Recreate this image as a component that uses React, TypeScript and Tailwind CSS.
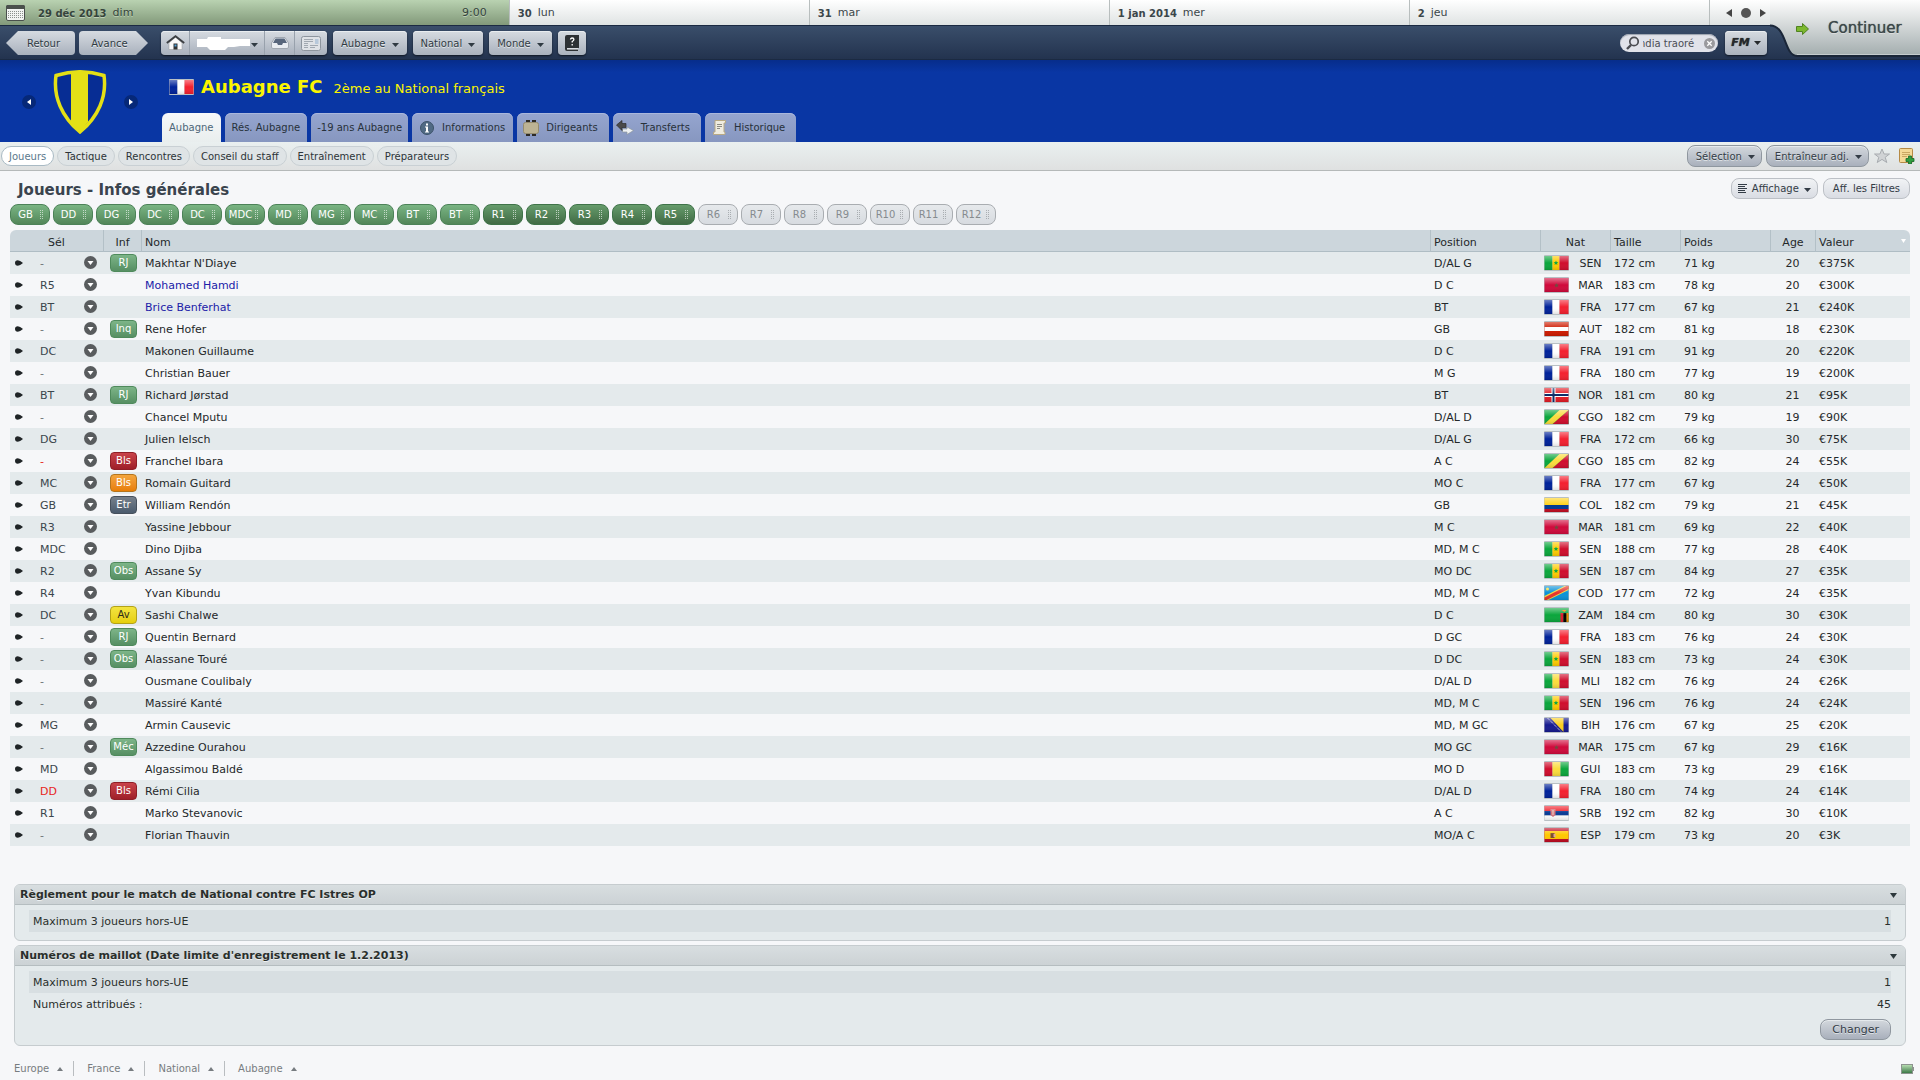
import type { ReactNode } from "react"

type Player = {
  sel: string
  inf?: string
  infColor?: string
  name: string
  pos: string
  nat: string
  cm: number
  kg: number
  age: number
  value: string
  linked?: boolean
  red?: boolean
}

const GREEN = "border-[#4f8a5c] bg-linear-to-b from-[#7db588] to-[#568f63] text-white"
const RED = "border-[#8f1f27] bg-linear-to-b from-[#c9434a] to-[#9f1f29] text-white"
const ORANGE = "border-[#b5751d] bg-linear-to-b from-[#f3a53c] to-[#e87e04] text-white"
const GREY = "border-[#46505c] bg-linear-to-b from-[#76808b] to-[#4b5b6d] text-white"
const YELLOW = "border-[#b3a218] bg-linear-to-b from-[#f3e43e] to-[#e6cf08] text-[#2b2b1a]"

const players: Player[] = [
  { sel: "-", inf: "RJ", infColor: GREEN, name: "Makhtar N'Diaye", pos: "D/AL G", nat: "SEN", cm: 172, kg: 71, age: 20, value: "€375K" },
  { sel: "R5", name: "Mohamed Hamdi", pos: "D C", nat: "MAR", cm: 183, kg: 78, age: 20, value: "€300K", linked: true },
  { sel: "BT", name: "Brice Benferhat", pos: "BT", nat: "FRA", cm: 177, kg: 67, age: 21, value: "€240K", linked: true },
  { sel: "-", inf: "Inq", infColor: GREEN, name: "Rene Hofer", pos: "GB", nat: "AUT", cm: 182, kg: 81, age: 18, value: "€230K" },
  { sel: "DC", name: "Makonen Guillaume", pos: "D C", nat: "FRA", cm: 191, kg: 91, age: 20, value: "€220K" },
  { sel: "-", name: "Christian Bauer", pos: "M G", nat: "FRA", cm: 180, kg: 77, age: 19, value: "€200K" },
  { sel: "BT", inf: "RJ", infColor: GREEN, name: "Richard Jørstad", pos: "BT", nat: "NOR", cm: 181, kg: 80, age: 21, value: "€95K" },
  { sel: "-", name: "Chancel Mputu", pos: "D/AL D", nat: "CGO", cm: 182, kg: 79, age: 19, value: "€90K" },
  { sel: "DG", name: "Julien Ielsch", pos: "D/AL G", nat: "FRA", cm: 172, kg: 66, age: 30, value: "€75K" },
  { sel: "-", inf: "Bls", infColor: RED, name: "Franchel Ibara", pos: "A C", nat: "CGO", cm: 185, kg: 82, age: 24, value: "€55K", red: true },
  { sel: "MC", inf: "Bls", infColor: ORANGE, name: "Romain Guitard", pos: "MO C", nat: "FRA", cm: 177, kg: 67, age: 24, value: "€50K" },
  { sel: "GB", inf: "Etr", infColor: GREY, name: "William Rendón", pos: "GB", nat: "COL", cm: 182, kg: 79, age: 21, value: "€45K" },
  { sel: "R3", name: "Yassine Jebbour", pos: "M C", nat: "MAR", cm: 181, kg: 69, age: 22, value: "€40K" },
  { sel: "MDC", name: "Dino Djiba", pos: "MD, M C", nat: "SEN", cm: 188, kg: 77, age: 28, value: "€40K" },
  { sel: "R2", inf: "Obs", infColor: GREEN, name: "Assane Sy", pos: "MO DC", nat: "SEN", cm: 187, kg: 84, age: 27, value: "€35K" },
  { sel: "R4", name: "Yvan Kibundu", pos: "MD, M C", nat: "COD", cm: 177, kg: 72, age: 24, value: "€35K" },
  { sel: "DC", inf: "Av", infColor: YELLOW, name: "Sashi Chalwe", pos: "D C", nat: "ZAM", cm: 184, kg: 80, age: 30, value: "€30K" },
  { sel: "-", inf: "RJ", infColor: GREEN, name: "Quentin Bernard", pos: "D GC", nat: "FRA", cm: 183, kg: 76, age: 24, value: "€30K" },
  { sel: "-", inf: "Obs", infColor: GREEN, name: "Alassane Touré", pos: "D DC", nat: "SEN", cm: 183, kg: 73, age: 24, value: "€30K" },
  { sel: "-", name: "Ousmane Coulibaly", pos: "D/AL D", nat: "MLI", cm: 182, kg: 76, age: 24, value: "€26K" },
  { sel: "-", name: "Massiré Kanté", pos: "MD, M C", nat: "SEN", cm: 196, kg: 76, age: 24, value: "€24K" },
  { sel: "MG", name: "Armin Causevic", pos: "MD, M GC", nat: "BIH", cm: 176, kg: 67, age: 25, value: "€20K" },
  { sel: "-", inf: "Méc", infColor: GREEN, name: "Azzedine Ourahou", pos: "MO GC", nat: "MAR", cm: 175, kg: 67, age: 29, value: "€16K" },
  { sel: "MD", name: "Algassimou Baldé", pos: "MO D", nat: "GUI", cm: 183, kg: 73, age: 29, value: "€16K" },
  { sel: "DD", inf: "Bls", infColor: RED, name: "Rémi Cilia", pos: "D/AL D", nat: "FRA", cm: 180, kg: 74, age: 24, value: "€14K", red: true },
  { sel: "R1", name: "Marko Stevanovic", pos: "A C", nat: "SRB", cm: 192, kg: 82, age: 30, value: "€10K" },
  { sel: "-", name: "Florian Thauvin", pos: "MO/A C", nat: "ESP", cm: 179, kg: 73, age: 20, value: "€3K" },
]

const starters = ["GB", "DD", "DG", "DC", "DC", "MDC", "MD", "MG", "MC", "BT", "BT"]
const subs = ["R1", "R2", "R3", "R4", "R5"]
const empties = ["R6", "R7", "R8", "R9", "R10", "R11", "R12"]

const STAR = "M12 5l.7 1.5 1.6.2-1.2 1.1.3 1.6-1.4-.8-1.4.8.3-1.6-1.2-1.1 1.6-.2z"

const flags: Record<string, ReactNode> = {
  FRA: (
    <>
      <path fill="#00229a" d="M0 0h8v14H0z" />
      <path fill="#fff" d="M8 0h7v14H8z" />
      <path fill="#f4202f" d="M15 0h9v14h-9z" />
    </>
  ),
  SEN: (
    <>
      <path fill="#0aa63c" d="M0 0h8v14H0z" />
      <path fill="#ffcb00" d="M8 0h7v14H8z" />
      <path fill="#d00d2d" d="M15 0h9v14h-9z" />
      <path fill="#0aa63c" d={STAR} transform="translate(-.5 -.5)" />
    </>
  ),
  MAR: (
    <>
      <path fill="#d0093b" d="M0 0h24v14H0z" />
      <path fill="#6d4a3c" d={STAR} />
    </>
  ),
  AUT: (
    <>
      <path fill="#cf1a00" d="M0 0h24v14H0z" />
      <path fill="#fff" d="M0 5h24v4H0z" />
    </>
  ),
  NOR: (
    <>
      <path fill="#e31b24" d="M0 0h24v14H0z" />
      <path fill="#fff" d="M7 0h4v14H7zM0 5h24v4H0z" />
      <path fill="#0a2a66" d="M8 0h2v14H8zM0 6h24v2H0z" />
    </>
  ),
  CGO: (
    <>
      <path fill="#0aa63c" d="M0 0h24v14H0z" />
      <path fill="#d00d2d" d="M24 0v14H8z" />
      <path fill="#fbdc3c" d="M15 0h9L8 14H0z" />
    </>
  ),
  COL: (
    <>
      <path fill="#ffd21a" d="M0 0h24v7H0z" />
      <path fill="#003893" d="M0 7h24v4H0z" />
      <path fill="#c40d22" d="M0 11h24v3H0z" />
    </>
  ),
  COD: (
    <>
      <path fill="#0a92d8" d="M0 0h24v14H0z" />
      <path fill="#f5dc3a" d="M0 10L20 0h4v4L4 14H0z" />
      <path fill="#e5322d" d="M0 11.500L22 0h2v3L2 14H0z" />
      <circle fill="#f5dc3a" cx="3" cy="3" r="1.500" />
    </>
  ),
  ZAM: (
    <>
      <path fill="#0aa63c" d="M0 0h24v14H0z" />
      <path fill="#e0182d" d="M16 5h3v9h-3z" />
      <path fill="#000" d="M19 5h3v9h-3z" />
      <path fill="#f08000" d="M22 5h2v9h-2zM17 2h5l-2 2z" />
    </>
  ),
  MLI: (
    <>
      <path fill="#0aa63c" d="M0 0h8v14H0z" />
      <path fill="#fbdc3c" d="M8 0h7v14H8z" />
      <path fill="#d00d2d" d="M15 0h9v14h-9z" />
    </>
  ),
  GUI: (
    <>
      <path fill="#d00d2d" d="M0 0h8v14H0z" />
      <path fill="#fbdc3c" d="M8 0h8v14H8z" />
      <path fill="#0aa63c" d="M16 0h8v14h-8z" />
    </>
  ),
  BIH: (
    <>
      <path fill="#161a8f" d="M0 0h24v14H0z" />
      <path fill="#fbcf1e" d="M6 0h13v14z" />
      <path stroke="#fff" strokeDasharray="1 1" d="M3 0l14 14" />
    </>
  ),
  SRB: (
    <>
      <path fill="#f0202c" d="M0 0h24v5H0z" />
      <path fill="#0a3b94" d="M0 5h24v4.500H0z" />
      <path fill="#fff" d="M0 9.500h24V14H0z" />
      <path fill="#d6707a" d="M6 3h5v6l-2.500 2L6 9z" />
      <path fill="#e8d9c8" d="M8 4h1v5H8z" />
    </>
  ),
  ESP: (
    <>
      <path fill="#c00a20" d="M0 0h24v14H0z" />
      <path fill="#ffc800" d="M0 3h24v8H0z" />
      <path fill="#7a4a2a" d="M6 5h4v5H6z" />
      <path fill="#e0a0a0" d="M9 6h2v3H9z" />
    </>
  ),
}

function Flag({ code }: { code: string }) {
  return (
    <svg className="h-4 w-[25px] shrink-0" viewBox="-.5 -1 25 16" aria-hidden="true">
      <defs>
        <linearGradient id={`gloss-${code}`} x1="0" y1="0" x2="0" y2="1">
          <stop offset="0" stopColor="#fff" stopOpacity=".42" />
          <stop offset=".5" stopColor="#fff" stopOpacity="0" />
          <stop offset="1" stopColor="#000" stopOpacity=".12" />
        </linearGradient>
      </defs>
      <rect x="-.5" y="-1" width="25" height="16" rx="1" fill="#b9c0c4" />
      {flags[code]}
      <rect width="24" height="14" fill={`url(#gloss-${code})`} />
    </svg>
  )
}

function Caret({ className = "" }: { className?: string }) {
  return (
    <svg className={`h-1 w-[7px] shrink-0 ${className}`} viewBox="0 0 7 4" fill="currentColor" aria-hidden="true">
      <path d="M0 0h7L3.500 4z" />
    </svg>
  )
}

function Grip() {
  return (
    <svg className="h-[9px] w-[3px] shrink-0 opacity-60" viewBox="0 0 3 9" fill="currentColor" aria-hidden="true">
      <path d="M0 0h1v1H0zM2 0h1v1H2zM0 2h1v1H0zM2 2h1v1H2zM0 4h1v1H0zM2 4h1v1H2zM0 6h1v1H0zM2 6h1v1H2zM0 8h1v1H0zM2 8h1v1H2z" />
    </svg>
  )
}

function Chip({ label, tone }: { label: string; tone: string }) {
  return (
    <button className={`flex h-[21px] w-10 items-center justify-between rounded-lg border pr-1.5 text-[10px] ${tone}`}>
      <span className="flex-1 text-center">{label}</span>
      <Grip />
    </button>
  )
}

const NAV_BTN =
  "flex h-6 items-center rounded bg-linear-to-b from-[#d6dbe1] to-[#a9b1bd] text-[10px] text-[#2f3a42] shadow-[0_1px_2px_rgba(0,0,0,.6),inset_0_1px_0_#e9edf0] [text-shadow:0_1px_0_#e3e7ea]"

function NavMenu({ label }: { label: string }) {
  return (
    <button className={`${NAV_BTN} gap-1.5 px-2`}>
      {label}
      <Caret className="mt-1" />
    </button>
  )
}

function TopBar() {
  const days = [
    ["30", "lun"],
    ["31", "mar"],
    ["1 jan 2014", "mer"],
    ["2", "jeu"],
  ]
  return (
    <div className="flex h-[25px] bg-linear-to-b from-white to-[#dfe3e3] text-[11px] text-[#3b464a]">
      <div className="flex w-[26.5%] items-center bg-linear-to-b from-[#b9d2b1] to-[#82997a] pr-[22px] pl-1.5 text-[#35443c] [text-shadow:0_1px_0_#bdd0b6]">
        <svg className="h-4 w-[19px]" viewBox="0 0 19 16" aria-hidden="true">
          <rect x=".5" y=".5" width="18" height="15" rx="1.500" fill="#f2f4f2" stroke="#4a504c" />
          <path fill="#4a504c" d="M0 1.500Q0 0 1.500 0h16Q19 0 19 1.500V4H0z" />
          <path stroke="#8b918d" strokeDasharray="1 1" d="M2 6.500h15M2 8.500h15M2 10.500h15M2 12.500h15" />
        </svg>
        <span className="ml-[13px] pt-px text-[10px] font-bold">29 déc 2013</span>
        <span className="ml-1.5 pt-0.5">dim</span>
        <span className="ml-auto pt-0.5">9:00</span>
      </div>
      {days.map(([date, day]) => (
        <div key={date} className="flex w-[15.625%] items-center gap-1.5 border-l border-[#b8bebe] pl-2">
          <span className="pt-px text-[10px] font-bold">{date}</span>
          <span className="pt-0.5">{day}</span>
        </div>
      ))}
      <div className="flex items-center gap-[9px] border-l border-[#b8bebe] pl-4 text-[#454545]">
        <button aria-label="Précédent">
          <svg className="h-2 w-1.5" viewBox="0 0 6 8" fill="currentColor"><path d="M6 0v8L0 4z" /></svg>
        </button>
        <button aria-label="Aujourd'hui" className="h-2.5 w-2.5 rounded-full bg-[#555]" />
        <button aria-label="Suivant">
          <svg className="h-2 w-1.5" viewBox="0 0 6 8" fill="currentColor"><path d="M0 0v8l6-4z" /></svg>
        </button>
      </div>
    </div>
  )
}

function ContinueButton() {
  return (
    <button className="absolute top-0 right-0 flex h-[57px] w-[150px] items-center text-[15px] text-[#3c484a]">
      <svg className="absolute inset-0 h-full w-full" viewBox="0 0 150 57" preserveAspectRatio="none" aria-hidden="true">
        <defs>
          <linearGradient id="cont" x1="0" y1="0" x2="0" y2="1">
            <stop offset="0" stopColor="#fdfdfd" />
            <stop offset="1" stopColor="#a3adae" />
          </linearGradient>
        </defs>
        <path d="M0 0h150v55.500H27C14 55.500 17 25 0 25z" fill="url(#cont)" />
        <path d="M0 25.500C17 25.500 14 56 27 56h123" fill="none" stroke="#1a2638" strokeWidth="2" />
        <path d="M27 54.500h123" stroke="#c5cccd" />
      </svg>
      <svg className="relative ml-[26px] h-3 w-[13px]" viewBox="0 0 13 12" aria-hidden="true">
        <path d="M.5 3.500h6v-3L12.500 6l-6 5.500v-3h-6z" fill="#7cb82e" stroke="#4f8220" />
      </svg>
      <span className="relative ml-[19px] [text-shadow:0_0_1px_#3c484a,0_1px_0_#eee]">Continuer</span>
    </button>
  )
}

function NavBar() {
  return (
    <div className="flex h-[35px] items-center border-y border-[#1b2a42] bg-linear-to-b from-[#3a4e6a] to-[#23334f] pt-px pr-[153px] pl-1.5 text-[10px] text-[#2f3a42]">
      <button className="flex h-6 w-[69px] items-center justify-center rounded bg-linear-to-b from-[#d6dbe1] to-[#a9b1bd] pl-1.5 [clip-path:polygon(0_50%,12px_0,100%_0,100%_100%,12px_100%)] [text-shadow:0_1px_0_#e3e7ea]">
        Retour
      </button>
      <button className="ml-1 flex h-6 w-[69px] items-center justify-center rounded bg-linear-to-b from-[#d6dbe1] to-[#a9b1bd] pr-2 [clip-path:polygon(0_0,57px_0,100%_50%,57px_100%,0_100%)] [text-shadow:0_1px_0_#e3e7ea]">
        Avance
      </button>
      <div className={`${NAV_BTN} ml-[13px] divide-x divide-[#98a1ac]`}>
        <button aria-label="Accueil" className="flex h-6 w-[29px] items-center justify-center">
          <svg className="h-4 w-[19px]" viewBox="0 0 19 16" aria-hidden="true">
            <path d="M3 8l6.500-6L16 8v6.500H3z" fill="#fafafa" stroke="#999" strokeWidth=".5" />
            <path d="M.8 8L9.500 1.200 18.200 8" fill="none" stroke="#3c3f42" strokeWidth="1.800" />
            <path fill="#303234" d="M7.500 8.500h4v6h-4z" />
            <path fill="#4fa0d8" d="M8.500 9.500h2v2h-2z" />
          </svg>
        </button>
        <button aria-label="Manager" className="flex h-6 w-[75px] items-center justify-end pr-1.5">
          <svg className="h-[15px] w-[54px]" viewBox="0 0 54 15" aria-hidden="true">
            <path fill="#fff" d="M0 3h10l1-2h13v2h29v7H43l-6 1h-6l-3 3H13l-3-3H0z" />
          </svg>
          <Caret className="mt-1" />
        </button>
        <button aria-label="Messages" className="flex h-6 w-[30px] items-center justify-center">
          <svg className="h-3 w-[18px]" viewBox="0 0 18 12" aria-hidden="true">
            <path d="M4 .5h10l3.500 5.500v4q0 1.500-1.500 1.500H2Q.5 11.500.5 10V6z" fill="#e9edf2" stroke="#a0a7b0" />
            <path d="M4.500 1.500h9L16 6h-4l-1 2H7L6 6H2z" fill="#57667c" />
          </svg>
        </button>
        <button aria-label="Actualités" className="flex h-6 w-8 items-center justify-center">
          <svg className="h-[15px] w-5" viewBox="0 0 20 15" aria-hidden="true">
            <rect x=".5" y=".5" width="19" height="14" rx="2" fill="#dfe2e6" stroke="#8d959e" />
            <path d="M3 3.500h9M3 5.500h9M3 7.500h4M3 9.500h4M3 11.500h4M9 9.500h8M9 11.500h5" stroke="#a1a8b0" />
            <path fill="#b7c8da" d="M14 3h3.500v5H14z" />
          </svg>
        </button>
      </div>
      <div className="ml-1.5 flex gap-1.5">
        <NavMenu label="Aubagne" />
        <NavMenu label="National" />
        <NavMenu label="Monde" />
        <button aria-label="Aide" className={`${NAV_BTN} w-7 justify-center`}>
          <svg className="h-4 w-[14px]" viewBox="0 0 14 16" aria-hidden="true">
            <path fill="#2d3134" d="M2 0h12v13H2v1h11v2H2q-2 0-2-2V2Q0 0 2 0z" />
            <path fill="#fff" d="M2 13.500h11v1H2z" />
            <path d="M5.500 4.500q0-1.500 1.700-1.500t1.700 1.500q0 1-1.700 2v1M7.200 9v1.500" fill="none" stroke="#fff" strokeWidth="1.300" />
          </svg>
        </button>
      </div>
      <label className="ml-auto flex h-[18px] w-[98px] items-center rounded-full bg-[#e1e3ea] pr-[3px] pl-1.5 shadow-[inset_0_1px_1px_#9aa1ad]">
        <svg className="h-[14px] w-[13px] shrink-0" viewBox="0 0 13 14" fill="none" stroke="#4b4d52" aria-label="Rechercher">
          <circle cx="8" cy="5.500" r="4.200" strokeWidth="1.700" />
          <path strokeWidth="2.400" d="M5 9l-4 4" />
        </svg>
        <input type="text" defaultValue="ndia traoré" className="ml-1 w-0 min-w-0 flex-1 indent-[-4px] text-[10px] text-[#4b4d55] outline-none" />
        <button aria-label="Effacer" className="ml-1 shrink-0">
          <svg className="h-[11px] w-[11px]" viewBox="0 0 11 11" aria-hidden="true">
            <circle cx="5.500" cy="5.500" r="5.500" fill="#9a9a9e" />
            <path stroke="#fff" strokeWidth="1.300" d="M3.300 3.300l4.400 4.400M7.700 3.300L3.300 7.700" />
          </svg>
        </button>
      </label>
      <button className={`${NAV_BTN} ml-[7px] w-[42px] justify-center gap-1 text-[#26292c]`}>
        <span className="text-[11px] font-black italic [text-shadow:0_0_1px_#26292c]">FM</span>
        <Caret />
      </button>
    </div>
  )
}

const TAB = "flex h-[29px] items-center rounded-t-md text-[10px]"
const TAB_IDLE = `${TAB} bg-linear-to-b from-[#95a5cf] to-[#8797c0] text-[#27313a] shadow-[inset_0_1px_0_#a9b7dc]`

function Banner() {
  return (
    <header className="flex h-[82px] bg-[#0936a4] bg-linear-to-b from-[#072d8b] to-[#0936a4] to-15%">
      <div className="flex w-[162px] shrink-0 items-center pt-px pl-[22px]">
        <button aria-label="Club précédent" className="flex h-[14px] w-[14px] items-center justify-center rounded-full bg-[#062878]">
          <svg className="h-1.5 w-1" viewBox="0 0 4 6" fill="#fff"><path d="M4 0v6L0 3z" /></svg>
        </button>
        <svg className="mx-[17px] h-16 w-[54px]" viewBox="0 0 54 64" aria-label="Aubagne FC">
          <path d="M3 5.500Q27-2 51 5.500C54 27 45 47 27 62 9 47 0 27 3 5.500z" fill="#072d94" />
          <path d="M18 1.500q9-1 17 0V52l-8 10L18 52z" fill="#e4e016" />
          <path d="M3 5.500Q27-2 51 5.500C54 27 45 47 27 62 9 47 0 27 3 5.500z" fill="none" stroke="#e4e016" strokeWidth="3.500" />
        </svg>
        <button aria-label="Club suivant" className="flex h-[14px] w-[14px] items-center justify-center rounded-full bg-[#062878]">
          <svg className="h-1.5 w-1" viewBox="0 0 4 6" fill="#fff"><path d="M0 0v6l4-3z" /></svg>
        </button>
      </div>
      <div className="flex flex-1 flex-col justify-between">
        <div className="flex items-baseline gap-[7px] pt-[15px] pl-[7px] text-[#fbf500]">
          <span className="self-center"><Flag code="FRA" /></span>
          <h1 className="text-[18px] leading-6 font-bold">Aubagne FC</h1>
          <span className="ml-1 text-[13px]">2ème au National français</span>
        </div>
        <nav className="flex gap-1">
          <a href="#" className={`${TAB} bg-linear-to-b from-[#f6f8fa] to-[#e9eeee] px-[7px] text-[#4d6678]`}>Aubagne</a>
          <a href="#" className={`${TAB_IDLE} px-[7px]`}>Rés. Aubagne</a>
          <a href="#" className={`${TAB_IDLE} px-1.5`}>-19 ans Aubagne</a>
          <a href="#" className={`${TAB_IDLE} gap-2 px-2`}>
            <svg className="h-[14px] w-[14px]" viewBox="0 0 14 14" aria-hidden="true">
              <circle cx="7" cy="7" r="6.500" fill="#506a84" stroke="#3c5269" />
              <path fill="#fff" d="M6 2.500h2v2H6zM5 5.500h3v5h1v1H5v-1h1v-4H5z" />
            </svg>
            Informations
          </a>
          <a href="#" className={`${TAB_IDLE} gap-[7px] pr-[11px] pl-1.5`}>
            <svg className="h-4 w-[16px]" viewBox="0 0 16 16" aria-hidden="true">
              <path fill="#2c2a26" d="M3 0h4v3H3zM9 0h4v3H9zM3 13h4v3H3zM9 13h4v3H9z" />
              <rect x=".5" y="2.500" width="15" height="11" rx="2" fill="#bcb394" stroke="#948b6e" />
            </svg>
            Dirigeants
          </a>
          <a href="#" className={`${TAB_IDLE} gap-[7px] pr-[11px] pl-[3px]`}>
            <svg className="h-[15px] w-[18px]" viewBox="0 0 18 15" aria-hidden="true">
              <path d="M11 7L17.500 10.500 11 14.500v-2.500H6.500V9H11z" fill="#eef1f3" stroke="#8d959c" strokeWidth=".7" />
              <path d="M.5 5L6 .5v3h4v4H6v3z" fill="#4a4a4a" stroke="#2c2c2c" strokeWidth=".7" />
            </svg>
            Transferts
          </a>
          <a href="#" className={`${TAB_IDLE} gap-2 pr-[11px] pl-2`}>
            <svg className="h-[15px] w-[13px]" viewBox="0 0 13 15" aria-hidden="true">
              <path d="M2 .5h10.500V3H11v9h1v2.500H.5V12H2z" fill="#efece0" stroke="#b7a985" />
              <path d="M4 4.500h5M4 6.500h5M4 8.500h3" stroke="#8c8c84" />
            </svg>
            Historique
          </a>
        </nav>
      </div>
    </header>
  )
}

const PILL = "flex h-5 items-center rounded-full border px-[7px] text-[10px]"
const SILVER =
  "flex items-center justify-center rounded-lg border border-[#8f979f] bg-linear-to-b from-[#d3d8dd] to-[#a9b0bc] text-[#333c46] shadow-[inset_0_1px_0_#e6eaed] [text-shadow:0_1px_0_#dfe3e7]"
const LIGHT =
  "flex h-[21px] items-center rounded-lg border border-[#bcc0c6] bg-linear-to-b from-[#f1f3f5] to-[#d9dce3]"

function SubNav() {
  return (
    <div className="flex h-[29px] items-center justify-between border-b border-[#b5b9b9] bg-linear-to-b from-[#eaf0f0] to-[#dfe1e1] pr-[5px] pl-px">
      <nav className="flex gap-[3px]">
        <a href="#" className={`${PILL} border-[#a9bac4] bg-white text-[#5b788c]`}>Joueurs</a>
        {["Tactique", "Rencontres", "Conseil du staff", "Entraînement", "Préparateurs"].map((t) => (
          <a key={t} href="#" className={`${PILL} border-[#c9d0d4] bg-[#dfe4e6] text-[#2d3438]`}>{t}</a>
        ))}
      </nav>
      <div className="flex items-center gap-1">
        <button className={`${SILVER} h-[22px] gap-1.5 pr-1.5 pl-2 text-[10px]`}>Sélection <Caret className="mt-0.5" /></button>
        <button className={`${SILVER} h-[22px] gap-1.5 pr-1.5 pl-2 text-[10px]`}>Entraîneur adj. <Caret className="mt-0.5" /></button>
        <button aria-label="Favori">
          <svg className="h-4 w-[18px]" viewBox="0 0 18 16" aria-hidden="true">
            <path d="M9 1l2.100 5H16.500l-4.300 3.300 1.600 5.200L9 11.400l-4.800 3.100 1.600-5.200L1.500 6h5.400z" fill="#d0d3d5" stroke="#a8acb0" />
          </svg>
        </button>
        <button aria-label="Ajouter une note" className="ml-1">
          <svg className="h-4 w-4" viewBox="0 0 16 16" aria-hidden="true">
            <rect x=".5" y=".5" width="13" height="14" rx="1" fill="#f4d997" stroke="#b58a45" />
            <path d="M3 4.500h8M3 6.500h8M3 8.500h5" stroke="#c9a763" />
            <path d="M9.500 8h3v2.500H15v3h-2.500V16h-3v-2.500H7v-3h2.500z" fill="#2f9e3e" stroke="#17682a" strokeWidth=".8" />
          </svg>
        </button>
      </div>
    </div>
  )
}

const TH = "border-l border-[#b3c0c7] pt-1 pl-[3px] text-left font-normal"
const TH_MID = "border-l border-[#b3c0c7] pt-1 text-center font-normal"
const TD = "pt-0.5 pl-1"

function Squad() {
  return (
    <table className="w-full table-fixed border-separate border-spacing-0 text-[11px] leading-[14px] text-[#24282a]">
      <colgroup>
        <col className="w-[93px]" />
        <col className="w-[38px]" />
        <col />
        <col className="w-[110px]" />
        <col className="w-[70px]" />
        <col className="w-[70px]" />
        <col className="w-[90px]" />
        <col className="w-[45px]" />
        <col className="w-[95px]" />
      </colgroup>
      <thead>
        <tr className="h-[22px] bg-[#ccd6dc] *:border-b *:border-b-[#afbdc4]">
          <th className="rounded-tl-md pt-1 font-normal">Sél</th>
          <th className={TH_MID}>Inf</th>
          <th className={TH}>Nom</th>
          <th className={TH}>Position</th>
          <th className={TH_MID}>Nat</th>
          <th className={TH}>Taille</th>
          <th className={TH}>Poids</th>
          <th className={TH_MID}>Age</th>
          <th className={`${TH} rounded-tr-md`}>
            <div className="flex items-center justify-between pr-1">
              Valeur
              <svg className="mb-1 h-1 w-[5px]" viewBox="0 0 5 4" fill="#fff" aria-hidden="true"><path d="M0 0h5L2.500 4z" /></svg>
            </div>
          </th>
        </tr>
      </thead>
      <tbody>
        {players.map((p) => (
          <tr key={p.name} className="h-[22px] odd:bg-[#e4eaec]">
            <td>
              <div className="flex items-center pl-[5px]">
                <svg className="h-1.5 w-2" viewBox="0 0 8 6" fill="#1f2426" aria-hidden="true">
                  <path d="M2.800.3Q5 .5 8 3 5 5.500 2.800 5.700 0 5.500 0 3T2.800.3z" />
                </svg>
                <span className={`ml-[17px] flex-1 pt-0.5 ${p.red ? "text-[#e8251c]" : p.sel === "-" ? "text-[#6d7376]" : "text-[#3b464c]"}`}>{p.sel}</span>
                <button aria-label={`Sélection ${p.name}`} className="mr-1.5 mb-px">
                  <svg className="block h-[13px] w-[13px]" viewBox="0 0 13 13" aria-hidden="true">
                    <circle cx="6.500" cy="6.500" r="6.500" fill="#595c5e" />
                    <path fill="#fff" d="M3.500 5h6l-3 4z" />
                  </svg>
                </button>
              </div>
            </td>
            <td>
              {p.inf && (
                <div className={`ml-[7px] flex h-[18px] w-[27px] items-center justify-center rounded border text-[10px] ${p.infColor}`}>{p.inf}</div>
              )}
            </td>
            <td className={TD}>
              <a href="#" className={p.linked ? "text-[#2121a8]" : ""}>{p.name}</a>
            </td>
            <td className={TD}>{p.pos}</td>
            <td>
              <div className="flex items-center pl-1">
                <Flag code={p.nat} />
                <span className="flex-1 pt-0.5 pl-0.5 text-center">{p.nat}</span>
              </div>
            </td>
            <td className={TD}>{p.cm} cm</td>
            <td className={TD}>{p.kg} kg</td>
            <td className="pt-0.5 text-center">{p.age}</td>
            <td className={TD}>{p.value}</td>
          </tr>
        ))}
      </tbody>
    </table>
  )
}

function Panel({ title, children }: { title: string; children: ReactNode }) {
  return (
    <section className="overflow-hidden rounded-md border border-[#c6cccf] bg-[#e4eaec] text-[11px] text-[#2a2f2c]">
      <div className="flex h-5 items-center justify-between border-b border-[#b5bdc0] bg-linear-to-b from-[#d8dee0] to-[#ccd2d5] pt-0.5 pr-2 pl-[5px]">
        <h3 className="font-bold [text-shadow:0_1px_0_#eef1f2]">{title}</h3>
        <button aria-label="Réduire">
          <svg className="h-[5px] w-[7px]" viewBox="0 0 7 5" fill="#2d383c"><path d="M0 0h7L3.500 5z" /></svg>
        </button>
      </div>
      <div className="px-3.5 pt-[5px]">{children}</div>
    </section>
  )
}

function PanelRow({ label, value, shaded }: { label: string; value: string; shaded?: boolean }) {
  return (
    <div className={`flex h-[22px] items-center justify-between pt-0.5 pl-1 ${shaded ? "bg-[#d8dfe2]" : ""}`}>
      <span>{label}</span>
      <span>{value}</span>
    </div>
  )
}

export default function App() {
  return (
    <div className="flex min-h-screen flex-col bg-[#f6f7f9] font-['DejaVu_Sans',sans-serif]">
      <div className="relative">
        <TopBar />
        <NavBar />
        <ContinueButton />
      </div>
      <Banner />
      <SubNav />

      <main className="flex-1 px-2.5">
        <div className="flex h-[33px] items-center justify-between pt-1 pl-2">
          <h2 className="pt-0.5 text-[15px] font-bold text-[#3a444e]">Joueurs - Infos générales</h2>
          <div className="flex gap-[5px] pb-0.5 text-[10px] text-[#333c46]">
            <button className={`${LIGHT} gap-[5px] px-1.5`}>
              <svg className="h-[9px] w-[9px]" viewBox="0 0 9 9" stroke="currentColor" aria-hidden="true">
                <path d="M0 .5h9M0 2.500h7M0 4.500h9M0 6.500h7M0 8.500h8" />
              </svg>
              Affichage
              <Caret className="mt-0.5" />
            </button>
            <button className={`${LIGHT} px-[9px]`}>Aff. les Filtres</button>
          </div>
        </div>

        <div className="mb-[5px] flex gap-[3px]">
          {starters.map((c, i) => (
            <Chip key={i} label={c} tone="border-[#4c8258] bg-linear-to-b from-[#7ab584] to-[#528659] text-white" />
          ))}
          {subs.map((c) => (
            <Chip key={c} label={c} tone="border-[#3f7349] bg-linear-to-b from-[#669c6c] to-[#416b45] text-white" />
          ))}
          {empties.map((c) => (
            <Chip key={c} label={c} tone="border-[#a9adb1] bg-linear-to-b from-[#e6e9ec] to-[#d7dbe0] text-[#868b8f]" />
          ))}
        </div>

        <Squad />

        <div className="mx-1 mt-[38px] flex flex-col gap-1">
          <Panel title="Règlement pour le match de National contre FC Istres OP">
            <div className="pb-2">
              <PanelRow label="Maximum 3 joueurs hors-UE" value="1" shaded />
            </div>
          </Panel>
          <Panel title="Numéros de maillot (Date limite d'enregistrement le 1.2.2013)">
            <PanelRow label="Maximum 3 joueurs hors-UE" value="1" shaded />
            <PanelRow label="Numéros attribués :" value="45" />
            <div className="flex justify-end pt-1 pb-[5px]">
              <button className={`${SILVER} h-[21px] px-[11px] pt-0.5 text-[11px]`}>Changer</button>
            </div>
          </Panel>
        </div>
      </main>

      <footer className="flex h-[23px] items-center justify-between pr-1.5 pl-3.5 text-[10px] text-[#777c80]">
        <div className="flex divide-x divide-[#b9bdc0]">
          {["Europe", "France", "National", "Aubagne"].map((t) => (
            <button key={t} className="flex items-center gap-2 pr-2.5 pl-[13px] first:pl-0">
              {t}
              <svg className="h-1 w-1.5" viewBox="0 0 6 4" fill="currentColor" aria-hidden="true"><path d="M3 0l3 4H0z" /></svg>
            </button>
          ))}
        </div>
        <svg className="h-[10px] w-[13px]" viewBox="0 0 13 10" aria-label="Batterie">
          <defs>
            <linearGradient id="bat" x1="0" y1="0" x2="0" y2="1">
              <stop offset="0" stopColor="#b5dcb0" />
              <stop offset="1" stopColor="#3d7a48" />
            </linearGradient>
          </defs>
          <rect width="12" height="10" fill="#8d948f" />
          <rect x="1" y="1" width="10" height="8" fill="url(#bat)" />
          <rect x="12" y="3" width="1" height="4" fill="#8d948f" />
        </svg>
      </footer>
    </div>
  )
}
